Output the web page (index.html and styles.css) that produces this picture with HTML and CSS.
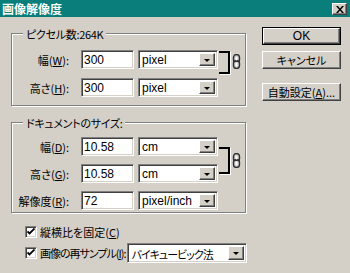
FILE: index.html
```html
<!DOCTYPE html>
<html lang="ja">
<head>
<meta charset="utf-8">
<link rel="stylesheet" href="styles.css">
</head>
<body>
<div class="window">
  <div class="titlebar">
    <span class="title">画像解像度</span>
    <span class="close raised"><svg width="8" height="7" viewBox="0 0 8 7"><path d="M0 0h2l2 2.5 2-2.5h2l-3 3.5 3 3.5h-2l-2-2.5-2 2.5h-2l3-3.5z" fill="#000"/></svg></span>
  </div>
  <div class="main">
    <div class="left">
      <div class="group g1">
        <div class="legend">ピクセル数:264K</div>
        <div class="pair p1">
          <div class="rows r1">
            <div class="row"><span class="label">幅(<u>W</u>):</span><span class="field sunken">300</span><span class="select sunken"><span class="val">pixel</span><span class="arrow raised"><i></i></span></span></div>
            <div class="row"><span class="label">高さ(<u>H</u>):</span><span class="field sunken">300</span><span class="select sunken"><span class="val">pixel</span><span class="arrow raised"><i></i></span></span></div>
          </div>
          <div class="bracket b1"></div>
          <svg class="chain c1" width="9" height="15" viewBox="0 0 9 15"><rect x="1.5" y="0.5" width="6" height="8" rx="3" fill="#c8c8c8" stroke="#303030" stroke-width="1.4"/><rect x="1.5" y="6.5" width="6" height="8" rx="3" fill="#c8c8c8" stroke="#303030" stroke-width="1.4"/><rect x="3.5" y="2.5" width="2" height="4" rx="1" fill="#fff"/><rect x="3.5" y="8.5" width="2" height="4" rx="1" fill="#fff"/><path d="M1.5 7.5h6" stroke="#303030" stroke-width="1"/></svg>
        </div>
      </div>
      <div class="group g2">
        <div class="legend">ドキュメントのサイズ:</div>
        <div class="body2">
          <div class="pair">
            <div class="rows r2">
              <div class="row"><span class="label">幅(<u>D</u>):</span><span class="field sunken">10.58</span><span class="select sunken"><span class="val">cm</span><span class="arrow raised"><i></i></span></span></div>
              <div class="row"><span class="label">高さ(<u>G</u>):</span><span class="field sunken">10.58</span><span class="select sunken"><span class="val">cm</span><span class="arrow raised"><i></i></span></span></div>
            </div>
            <div class="bracket b2"></div>
            <svg class="chain c2" width="9" height="15" viewBox="0 0 9 15"><rect x="1.5" y="0.5" width="6" height="8" rx="3" fill="#c8c8c8" stroke="#303030" stroke-width="1.4"/><rect x="1.5" y="6.5" width="6" height="8" rx="3" fill="#c8c8c8" stroke="#303030" stroke-width="1.4"/><rect x="3.5" y="2.5" width="2" height="4" rx="1" fill="#fff"/><rect x="3.5" y="8.5" width="2" height="4" rx="1" fill="#fff"/><path d="M1.5 7.5h6" stroke="#303030" stroke-width="1"/></svg>
          </div>
          <div class="row"><span class="label">解像度(<u>R</u>):</span><span class="field sunken">72</span><span class="select sunken"><span class="val">pixel/inch</span><span class="arrow raised"><i></i></span></span></div>
        </div>
      </div>
      <div class="checks">
        <div class="check"><span class="box sunken"><svg width="8" height="8" viewBox="0 0 8 8"><path d="M0.5 3.5l2 2 5-5" fill="none" stroke="#000" stroke-width="1.8"/></svg></span><span>縦横比を固定(<u>C</u>)</span></div>
        <div class="check c2"><span class="box sunken"><svg width="8" height="8" viewBox="0 0 8 8"><path d="M0.5 3.5l2 2 5-5" fill="none" stroke="#000" stroke-width="1.8"/></svg></span><span class="ctext">画像の再サンプル(<u>I</u>):</span><span class="select sunken wide"><span class="val">バイキュービック法</span><span class="arrow raised"><i></i></span></span></div>
      </div>
    </div>
    <div class="buttons">
      <div class="btn default"><span class="raised inner">OK</span></div>
      <div class="btn raised">キャンセル</div>
      <div class="btn raised auto">自動設定(<u>A</u>)...</div>
    </div>
  </div>
</div>
</body>
</html>
```

FILE: styles.css
```css
html, body {
  margin: 0;
  padding: 0;
}
body {
  width: 350px;
  height: 273px;
  overflow: hidden;
  background: #d4d0c8;
  font-family: "Noto Sans CJK JP", "Liberation Sans", sans-serif;
  font-size: 11px;
  line-height: 14px;
  color: #000;
  font-feature-settings: "palt";
}
u { text-decoration: underline; text-underline-offset: 1px; }

.sunken {
  box-sizing: border-box;
  border: 1px solid;
  border-color: #808080 #ffffff #ffffff #808080;
  box-shadow: inset 1px 1px 0 #404040, inset -1px -1px 0 #d4d0c8;
  background: #fff;
}
.raised {
  box-sizing: border-box;
  border: 1px solid;
  border-color: #ffffff #404040 #404040 #ffffff;
  box-shadow: inset -1px -1px 0 #808080, inset 1px 1px 0 #d4d0c8;
  background: #d4d0c8;
}

.titlebar {
  height: 17px;
  background: #0a7e7a;
  display: flex;
  align-items: center;
  justify-content: space-between;
  padding: 0 3px 0 2px;
}
.title {
  color: #fff;
  font-weight: bold;
  font-size: 12px;
  font-feature-settings: normal;
}
.close {
  width: 15px;
  height: 12px;
  display: flex;
  align-items: center;
  justify-content: center;
  margin-top: 1px;
}

.main {
  display: flex;
  align-items: flex-start;
}
.left {
  margin-left: 11px;
  width: 236px;
  flex-shrink: 0;
}

.group {
  width: 235px;
  box-sizing: border-box;
  border: 1px solid #808080;
  box-shadow: 1px 1px 0 #fff, inset 1px 1px 0 #fff;
}
.g1 {
  margin-top: 16px;
  padding-bottom: 8px;
}
.g2 {
  margin-top: 16px;
  padding-bottom: 2px;
}
.legend {
  width: fit-content;
  margin: -7px 0 0 11px;
  padding: 0 3px;
  background: #d4d0c8;
  line-height: 14px;
  letter-spacing: -0.3px;
}

.pair {
  display: flex;
  align-items: flex-start;
}
.r1 { margin-top: 9px; }
.body2 { margin-top: 7px; display: flex; flex-direction: column; gap: 8px; }
.rows {
  display: flex;
  flex-direction: column;
}
.r1 { gap: 9px; }
.r2 { gap: 8px; }

.row {
  display: flex;
  align-items: center;
  height: 19px;
}
.label {
  width: 57px;
  text-align: right;
  margin-right: 12px;
  white-space: nowrap;
}
.field {
  width: 53px;
  height: 19px;
  padding: 2px 0 0 2px;
  margin-right: 4px;
  font-family: "Liberation Sans", sans-serif;
  font-size: 12px;
  line-height: 14px;
}
.select {
  width: 80px;
  height: 19px;
  display: flex;
  align-items: stretch;
  padding: 2px;
  flex-shrink: 0;
}
.val {
  flex: 1;
  padding: 1px 0 0 1px;
  font-family: "Liberation Sans", sans-serif;
  font-size: 12px;
  line-height: 13px;
  white-space: nowrap;
}
.arrow {
  width: 16px;
  flex-shrink: 0;
  display: flex;
  align-items: center;
  justify-content: center;
}
.arrow i {
  width: 0;
  height: 0;
  border-left: 3px solid transparent;
  border-right: 3px solid transparent;
  border-top: 3px solid #000;
  margin-top: 1px;
}

.bracket {
  box-sizing: border-box;
  width: 11px;
  margin-left: 1px;
  border: 2px solid #000;
  border-left: 0;
  box-shadow: 1px 1px 0 #fff;
}
.b1 { height: 23px; margin-top: 10px; }
.b2 { height: 27px; margin-top: 10px; }
.chain {
  margin-left: 2px;
  display: block;
}
.chain.c1 { margin-top: 13px; }
.chain.c2 { margin-top: 16px; }

.checks {
  margin-top: 11px;
  padding-left: 14px;
  display: flex;
  flex-direction: column;
  gap: 3px;
}
.check {
  display: flex;
  align-items: center;
  height: 16px;
}
.check.c2 { height: 20px; }
.box {
  width: 12px;
  height: 12px;
  margin-right: 3px;
  flex-shrink: 0;
  display: flex;
  align-items: center;
  justify-content: center;
}
.ctext {
  flex-shrink: 0;
  margin-right: 1px;
  white-space: nowrap;
  letter-spacing: -1px;
}
.select.wide {
  width: 120px;
  height: 20px;
}
.select.wide .val {
  font-family: "Noto Sans CJK JP", sans-serif;
  font-size: 11px;
  padding: 0 0 0 2px;
  line-height: 16px;
  letter-spacing: -1px;
}

.buttons {
  margin-left: 15px;
  margin-top: 10px;
  display: flex;
  flex-direction: column;
  width: 79px;
}
.btn {
  height: 18px;
  display: flex;
  align-items: center;
  justify-content: center;
  box-sizing: border-box;
}
.btn.default {
  border: 1px solid #000;
}
.btn.default .inner {
  width: 100%;
  height: 100%;
  display: flex;
  align-items: center;
  justify-content: center;
  font-family: "Liberation Sans", sans-serif;
  font-size: 12px;
}
.btn + .btn { margin-top: 6px; }
.btn.auto { margin-top: 14px; }
```
